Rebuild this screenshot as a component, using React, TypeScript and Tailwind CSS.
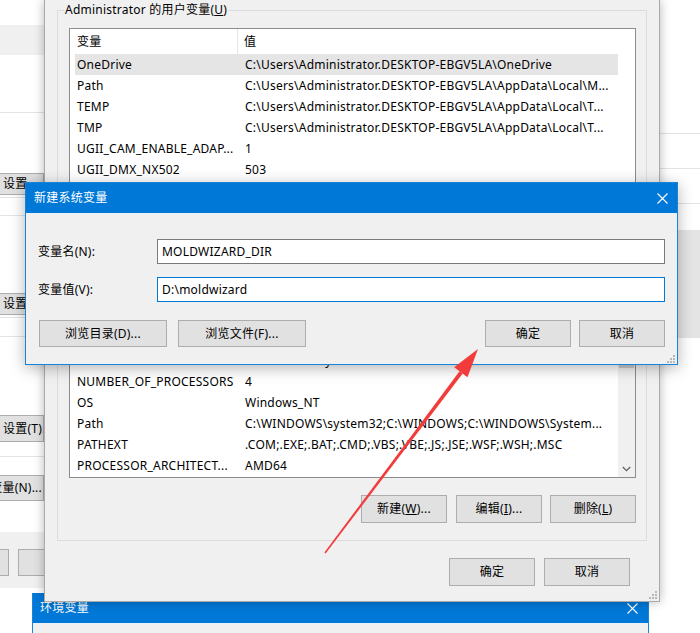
import React from "react";

function Btn({ className = "", children }: { className?: string; children?: React.ReactNode }) {
  return (
    <div
      className={
        "flex items-center justify-center bg-[#e1e1e1] border border-[#adadad] text-[12px] text-black whitespace-nowrap " +
        className
      }
    >
      {children}
    </div>
  );
}

function Row({ a, b, sel = false, hidden = false }: { a: string; b: string; sel?: boolean; hidden?: boolean }) {
  return (
    <div
      className={
        "flex h-[21px] shrink-0 items-center whitespace-nowrap " +
        (sel ? "bg-[#e5e5e5] " : "") +
        (hidden ? "invisible" : "")
      }
    >
      <div className="w-[168px] shrink-0 overflow-hidden pl-[2px]">{a}</div>
      <div className="flex-1 overflow-hidden pl-[2px]">{b}</div>
    </div>
  );
}

function Header({ hidden = false }: { hidden?: boolean }) {
  return (
    <div className={"flex h-[25px] shrink-0 items-center bg-white " + (hidden ? "invisible" : "")}>
      <div className="flex h-full w-[163px] items-center border-r border-[#e5e5e5] pl-[2px]">变量</div>
      <div className="pl-[6px]">值</div>
    </div>
  );
}

function Grip() {
  return (
    <svg width="9" height="9" viewBox="0 0 9 9">
      <rect x="7" y="1" width="2" height="2" fill="#b8b8b8" />
      <rect x="4" y="4" width="2" height="2" fill="#b8b8b8" />
      <rect x="7" y="4" width="2" height="2" fill="#b8b8b8" />
      <rect x="1" y="7" width="2" height="2" fill="#b8b8b8" />
      <rect x="4" y="7" width="2" height="2" fill="#b8b8b8" />
      <rect x="7" y="7" width="2" height="2" fill="#b8b8b8" />
    </svg>
  );
}

function CloseX() {
  return (
    <svg width="11" height="11" viewBox="0 0 11 11">
      <path d="M0.5 0.5 L10.5 10.5 M10.5 0.5 L0.5 10.5" stroke="#ffffff" strokeWidth="1.1" />
    </svg>
  );
}

export default function App() {
  return (
    <div className="relative h-[633px] w-[700px] overflow-hidden bg-white text-[12px] tracking-[0.23px] text-black font-[Noto_Sans,Noto_Sans_CJK_SC,sans-serif]">
      {/* left background window (system properties) */}
      <div className="absolute left-0 top-0 flex h-[588px] w-[44px] flex-col overflow-hidden bg-white">
        <div className="h-[25px] shrink-0" />
        <div className="h-[30px] shrink-0 bg-[#f0f0f0]" />
        <div className="h-[58px] shrink-0 border-b border-[#e3e3e3]" />
        <div className="h-[60px] shrink-0" />
        <Btn className="h-[22px] shrink-0 !justify-start border-l-0 pl-[3px]">设置</Btn>
        <div className="h-[3px] shrink-0 border-b border-[#e3e3e3]" />
        <div className="h-[18px] shrink-0 border-b border-[#e3e3e3]" />
        <div className="h-[77px] shrink-0" />
        <Btn className="h-[22px] shrink-0 !justify-start border-l-0 pl-[3px]">设置</Btn>
        <div className="h-[3px] shrink-0 border-b border-[#e3e3e3]" />
        <div className="h-[19px] shrink-0 border-b border-[#e3e3e3]" />
        <div className="h-[78px] shrink-0" />
        <Btn className="h-[27px] shrink-0 !justify-start overflow-hidden border-l-0 pl-[3px]">设置(T)...</Btn>
        <div className="h-[15px] shrink-0 border-b border-[#e3e3e3]" />
        <div className="h-[18px] shrink-0" />
        <Btn className="h-[26px] shrink-0 !justify-end overflow-hidden border-l-0 pr-[1px]">环境变量(N)...</Btn>
        <div className="h-[31px] shrink-0" />
        <div className="flex flex-1 items-start bg-[#f0f0f0] pt-[17px]">
          <Btn className="ml-[-71px] h-[27px] w-[80px] shrink-0" />
          <Btn className="ml-[9px] h-[27px] w-[80px] shrink-0" />
        </div>
      </div>

      {/* right background window */}
      <div className="absolute left-[660px] top-0 flex h-[633px] w-[40px] flex-col bg-white">
        <div className="h-[134px] shrink-0 border-b border-[#e3e3e3]" />
        <div className="h-[35px] shrink-0 border-b border-[#e3e3e3]" />
        <div className="h-[35px] shrink-0 border-b border-[#e3e3e3]" />
        <div className="h-[26px] shrink-0" />
        <div className="h-[108px] shrink-0 bg-[#e4e4e4]" />
      </div>

      {/* bottom window 环境变量 */}
      <div className="absolute left-[32px] top-[593px] flex h-[60px] w-[617px] flex-col border-x border-[#1883d7] bg-[#f0f0f0]">
        <div className="flex h-[30px] items-center justify-between bg-[#0078d7] pl-[7px] pr-[10px] text-white">
          <span>环境变量</span>
          <CloseX />
        </div>
      </div>

      {/* main window 环境变量 */}
      <div className="absolute left-[44px] top-0 flex h-[602px] w-[616px] flex-col border-x border-b border-[#aaaaaa] bg-[#f0f0f0] pl-[12px] shadow-[0_0_10px_rgba(0,0,0,0.28)]">
        {/* user variables */}
        <div className="relative mt-[10px] flex h-[226px] w-[590px] shrink-0 flex-col border border-[#dcdcdc] px-[11px] pt-[17px]">
          <div className="absolute left-[6px] top-[-10px] bg-[#f0f0f0] px-[1px] leading-[18px]">
            Administrator 的用户变量(<span className="underline">U</span>)
          </div>
          <div className="flex h-[168px] w-[567px] shrink-0 border border-[#8c8c8c] bg-white">
            <div className="flex flex-1 flex-col overflow-hidden pl-[5px]">
              <Header />
              <Row a="OneDrive" b="C:\Users\Administrator.DESKTOP-EBGV5LA\OneDrive" sel />
              <Row a="Path" b="C:\Users\Administrator.DESKTOP-EBGV5LA\AppData\Local\M..." />
              <Row a="TEMP" b="C:\Users\Administrator.DESKTOP-EBGV5LA\AppData\Local\T..." />
              <Row a="TMP" b="C:\Users\Administrator.DESKTOP-EBGV5LA\AppData\Local\T..." />
              <Row a="UGII_CAM_ENABLE_ADAP..." b="1" />
              <Row a="UGII_DMX_NX502" b="503" />
              <Row a="UGII_LANG" b="simpl_chinese" hidden />
            </div>
            <div className="w-[17px] shrink-0" />
          </div>
          <div className="invisible mt-[13px] flex w-[567px] justify-end">
            <Btn className="h-[28px] w-[86px]">新建(<span className="underline">N</span>)...</Btn>
            <Btn className="ml-[9px] h-[28px] w-[86px]">编辑(<span className="underline">E</span>)...</Btn>
            <Btn className="ml-[8px] h-[28px] w-[86px]">删除(<span className="underline">D</span>)</Btn>
          </div>
        </div>

        {/* system variables */}
        <div className="relative mt-[14px] flex h-[291px] w-[590px] shrink-0 flex-col border border-[#dcdcdc] px-[11px] pt-[17px]">
          <div className="invisible absolute left-[6px] top-[-10px] bg-[#f0f0f0] px-[1px] leading-[18px]">
            系统变量(<span className="underline">S</span>)
          </div>
          <div className="flex h-[210px] w-[567px] shrink-0 border border-[#8c8c8c] bg-white">
            <div className="flex flex-1 flex-col overflow-hidden pl-[5px]">
              <Header hidden />
              <div className="flex flex-1 flex-col justify-end overflow-hidden pb-[1px]">
                <Row a="ComSpec" b="C:\WINDOWS\system32\cmd.exe" hidden />
                <Row a="DriverData" b="C:\Windows\System32\Drivers\DriverData" />
                <Row a="NUMBER_OF_PROCESSORS" b="4" />
                <Row a="OS" b="Windows_NT" />
                <Row a="Path" b="C:\WINDOWS\system32;C:\WINDOWS;C:\WINDOWS\System..." />
                <Row a="PATHEXT" b=".COM;.EXE;.BAT;.CMD;.VBS;.VBE;.JS;.JSE;.WSF;.WSH;.MSC" />
                <Row a="PROCESSOR_ARCHITECT..." b="AMD64" />
              </div>
            </div>
            <div className="flex w-[17px] shrink-0 flex-col bg-[#f0f0f0]">
              <div className="h-[17px] shrink-0" />
              <div className="mx-[1px] h-[82px] shrink-0 bg-[#cdcdcd]" />
              <div className="flex-1" />
              <div className="flex h-[17px] shrink-0 items-center justify-center">
                <svg width="9" height="6" viewBox="0 0 9 6">
                  <path d="M0.8 1 L4.5 4.7 L8.2 1" stroke="#606060" strokeWidth="1.3" fill="none" />
                </svg>
              </div>
            </div>
          </div>
          <div className="mt-[17px] flex w-[567px] justify-end">
            <Btn className="h-[28px] w-[86px]">新建(<span className="underline">W</span>)...</Btn>
            <Btn className="ml-[9px] h-[28px] w-[86px]">编辑(<span className="underline">I</span>)...</Btn>
            <Btn className="ml-[8px] h-[28px] w-[86px]">删除(<span className="underline">L</span>)</Btn>
          </div>
        </div>

        {/* OK / Cancel */}
        <div className="mt-[17px] flex w-[590px] justify-end pr-[17px]">
          <Btn className="h-[28px] w-[86px]">确定</Btn>
          <Btn className="ml-[9px] h-[28px] w-[86px]">取消</Btn>
        </div>
        <div className="flex flex-1 items-end justify-end pb-[2px] pr-[2px]">
          <Grip />
        </div>
      </div>

      {/* new system variable dialog */}
      <div className="absolute left-[25px] top-[182px] flex h-[183px] w-[653px] flex-col border border-[#1883d7] bg-[#f0f0f0] shadow-[0_3px_14px_rgba(0,0,0,0.3)]">
        <div className="flex h-[30px] shrink-0 items-center justify-between bg-[#0078d7] pl-[8px] pr-[9px] text-white">
          <span>新建系统变量</span>
          <CloseX />
        </div>
        <div className="flex flex-1 flex-col px-[12px] pt-[26px]">
          <div className="flex h-[25px] items-center">
            <div className="w-[119px] shrink-0">变量名(N):</div>
            <div className="flex h-full flex-1 items-center border border-[#7a7a7a] bg-white pl-[4px]">MOLDWIZARD_DIR</div>
          </div>
          <div className="mt-[13px] flex h-[25px] items-center">
            <div className="w-[119px] shrink-0">变量值(V):</div>
            <div className="flex h-full flex-1 items-center border border-[#0078d7] bg-white pl-[4px]">D:\moldwizard</div>
          </div>
          <div className="mt-[18px] flex h-[27px] items-stretch">
            <Btn className="ml-[1px] w-[128px]">浏览目录(D)...</Btn>
            <Btn className="ml-[11px] w-[128px]">浏览文件(F)...</Btn>
            <div className="flex-1" />
            <Btn className="w-[86px]">确定</Btn>
            <Btn className="ml-[8px] w-[86px]">取消</Btn>
          </div>
          <div className="flex flex-1 items-end justify-end pb-[1px]">
            <div className="mr-[-10px]">
              <Grip />
            </div>
          </div>
        </div>
      </div>

      {/* red arrow annotation */}
      <svg className="pointer-events-none absolute left-0 top-0" width="700" height="633" viewBox="0 0 700 633">
        <polygon points="325.6,553.5 324.4,552.5 459.5,371.2 462.7,373.6" fill="#f23b3b" />
        <polygon points="478,349 467.5,377.2 454.2,367.2" fill="#f23b3b" />
      </svg>
    </div>
  );
}
